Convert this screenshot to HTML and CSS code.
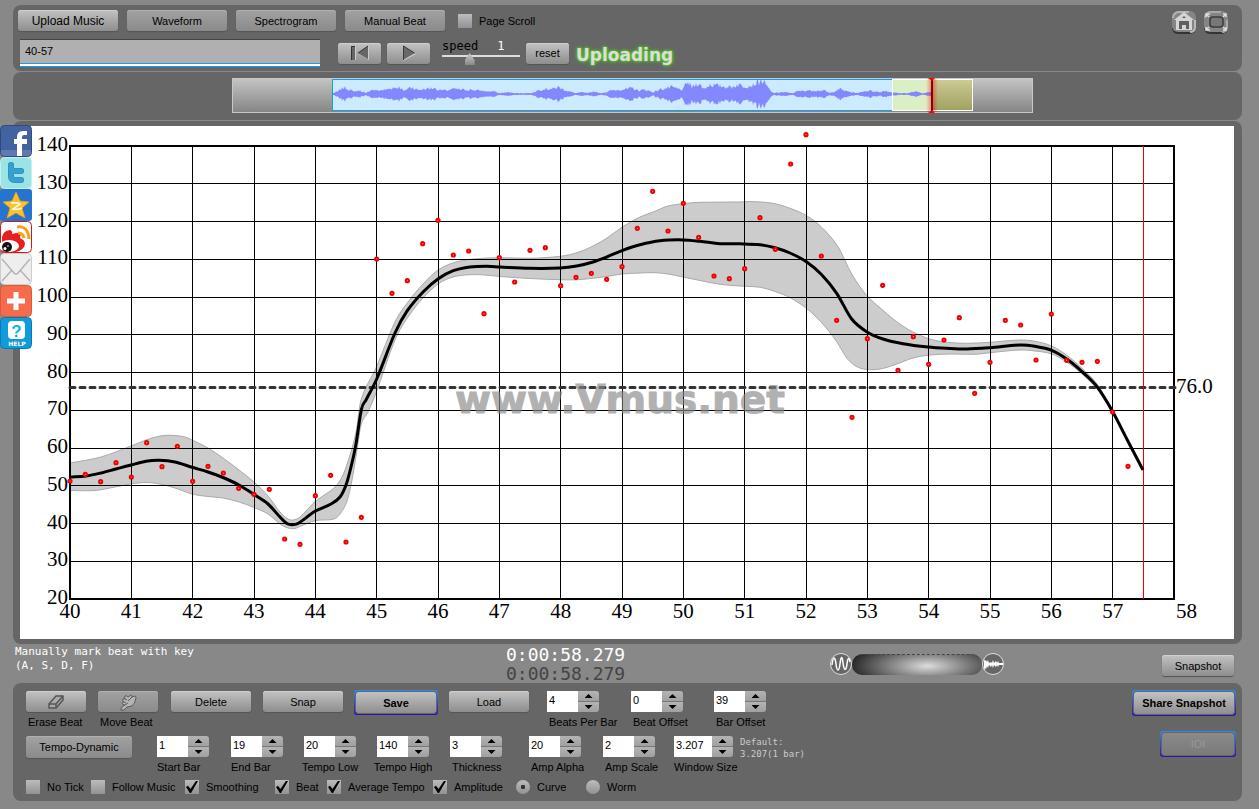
FILE: index.html
```html
<!DOCTYPE html>
<html lang="en">
<head>
<meta charset="utf-8">
<title>Vmus.net</title>
<link rel="stylesheet" href="styles.css">
</head>
<body>
<main class="app">
  <header class="panel toolbar">
    <div class="toolbar-rows">
      <div class="row tabs">
        <button class="btn wide upload" type="button">Upload Music</button>
        <button class="btn wide dim" type="button">Waveform</button>
        <button class="btn wide dim" type="button">Spectrogram</button>
        <button class="btn wide dim" type="button">Manual Beat</button>
        <label class="check page-scroll"><input type="checkbox">Page Scroll</label>
      </div>
      <div class="row player">
        <input class="title-field" type="text" value="40-57" aria-label="Title">
        <div class="transport">
          <button class="btn" type="button" aria-label="Back to start">
            <svg width="24" height="18" viewBox="0 0 24 18"><path d="M4 2h4v14H4zM21 2v14L11 9z" fill="#ccc"/><path d="M3 2h4v14H3zM20 2v13L10 9z" fill="#666"/><path d="M3.500 16V2.500H7M10 9L20 2" fill="none" stroke="#333"/></svg>
          </button>
          <button class="btn" type="button" aria-label="Play">
            <svg width="24" height="18" viewBox="0 0 24 18"><path d="M6 2v15l13-7z" fill="#ccc"/><path d="M6 2v14l12-7z" fill="#686868"/><path d="M6.500 16V2l11 7" fill="none" stroke="#3a3a3a"/></svg>
          </button>
        </div>
        <div class="speed">
          <div class="speed-text"><label for="speed">speed</label><output for="speed">1</output></div>
          <input id="speed" type="range" min="0" max="3" step="1" value="1">
        </div>
        <button class="btn reset" type="button">reset</button>
        <strong class="uploading">Uploading</strong>
      </div>
    </div>
    <nav class="window-links" aria-label="Window">
      <a href="#home" aria-label="Home">
        <svg width="26" height="24" viewBox="0 0 26 24"><rect x="1" y="2" width="24" height="22" rx="6" fill="#333"/><rect x="1" y="1" width="24" height="21" rx="6" fill="#858585"/><path d="M2 8a6 6 0 016-6h10" fill="none" stroke="#b4b4b4" stroke-width="2"/><path d="M24 10v7q0 5-5 5" fill="none" stroke="#bbb" stroke-width="2"/><path d="M13 2l10 8h-2v10H5V10H3z" fill="#d5d5d5"/><path d="M8 11h10v8h-3v-4h-4v4H8zM11 8l2-2 2 2z" fill="#606060"/></svg>
      </a>
      <a href="#fullscreen" aria-label="Full screen">
        <svg width="26" height="24" viewBox="0 0 26 24"><rect x="1" y="2" width="24" height="22" rx="6" fill="#333"/><rect x="1" y="1" width="24" height="21" rx="6" fill="#858585"/><path d="M2 8a6 6 0 016-6h10" fill="none" stroke="#a8a8a8" stroke-width="2"/><path d="M24 10v7q0 5-5 5" fill="none" stroke="#aaa" stroke-width="2"/><rect x="7" y="7" width="13" height="10" rx="3" fill="#777" stroke="#3c3c3c" stroke-width="1.500"/><path d="M3 7V4h4M20 4h3v3M3 17v3h4M23 17v3h-3M4 5l2 2M22 5l-2 2M4 19l2-2M22 19l-2-2" fill="none" stroke="#ddd" stroke-width="1.500"/></svg>
      </a>
    </nav>
  </header>

  <section class="panel overview" aria-label="Overview">
    <svg id="overview" viewBox="0 0 801 35" role="img" aria-label="Audio overview">
      <defs>
        <linearGradient id="track" x2="0" y2="1"><stop stop-color="#c4c4c4"/><stop offset="1" stop-color="#858585"/></linearGradient>
        <linearGradient id="olive" x2="0" y2="1"><stop stop-color="#cccc94"/><stop offset="1" stop-color="#a0a060"/></linearGradient>
        <linearGradient id="glow"><stop stop-color="#f00" stop-opacity="0"/><stop offset=".5" stop-color="#f00" stop-opacity=".45"/><stop offset="1" stop-color="#f00" stop-opacity="0"/></linearGradient>
      </defs>
      <rect x=".5" y=".5" width="800" height="34" fill="url(#track)" stroke="#c8c8c8"/>
      <rect x="100.500" y="1.500" width="600" height="31" fill="#cdebff" stroke="#1a9cf0"/>
      <rect x="660" y="1" width="41" height="32" fill="#daf0c4"/>
      <path id="wave" fill="#8488ff"/>
      <rect x="701" y="1" width="39" height="32" fill="url(#olive)"/>
      <rect x="660.500" y="1.500" width="80" height="31" fill="none" stroke="#fff"/>
      <rect x="694" y="1" width="12" height="33" fill="url(#glow)"/>
      <path d="M700 1v33" stroke="#c00" stroke-width="2"/><path d="M700 2v31" stroke="#400"/>
      <path d="M696 0h7l-3 3zM696 35h7l-3-3z" fill="#f00"/>
    </svg>
  </section>

  <section class="panel chart-panel" aria-label="Tempo curve">
    <svg id="chart" viewBox="20 126 1214 513" role="img" aria-label="Tempo curve, bars 40 to 57">
      <rect x="20" y="126" width="1214" height="513" fill="#fff"/>
      <path id="band" fill="#ccc" stroke="#aaa"/>
      <path id="grid" fill="none" stroke="#000" shape-rendering="crispEdges"/>
      <rect x="70" y="146" width="1104" height="453" fill="none" stroke="#000" stroke-width="2"/>
      <path d="M70 387.500H1176" stroke="#333" stroke-width="3" stroke-dasharray="5 5" stroke-linecap="round"/>
      <path d="M1143.500 146V599" stroke="#e00"/>
      <path id="curve" fill="none" stroke="#000" stroke-width="3"/>
      <g id="dots" fill="#f99" stroke="#f00000" stroke-width="2"></g>
      <g id="axis" class="axis"></g>
      <text class="axis" x="1176" y="393">76.0</text>
      <text class="watermark" x="455" y="413">www.Vmus.net</text>
    </svg>
  </section>

  <section class="status">
    <p class="hint">Manually mark beat with key<br>(A, S, D, F)</p>
    <div class="times"><time>0:00:58.279</time><time class="shadow-time">0:00:58.279</time></div>
    <div class="zoomer">
      <svg width="22" height="24" viewBox="0 0 22 24"><circle cx="11" cy="12" r="10.500" fill="#666" stroke="#ddd"/><path d="M2 13C3 4 5 4 6 12s3 8 4 0 2-9 3-1 3 9 4 1 2-6 3-2" fill="none" stroke="#fff" stroke-width="1.500"/></svg>
      <div class="wheel"></div>
      <svg width="22" height="24" viewBox="0 0 22 24"><circle cx="11" cy="12" r="10.500" fill="#666" stroke="#ddd"/><path d="M2 7l1 2 1-1 1 2 1-2 1 3 2-1 1 1 1-3 1 3 2-2 1 2 1-2 1 2h4v2h-4l-1 2-1-2-1 2-2-2-1 3-1-3-1 2-2-2-1 3-1-2-1 3-1-1-1 2z" fill="#fff"/></svg>
    </div>
    <button class="btn snapshot" type="button">Snapshot</button>
  </section>

  <section class="panel controls" aria-label="Settings">
    <div class="settings">
      <div class="grid-edit">
        <div class="field"><button class="btn icon" id="erase" type="button">
          <svg width="20" height="18" viewBox="0 0 20 18"><path d="M3 11l7-8h7v4l-7 8H3z" fill="#aaa" stroke="#555" stroke-width="1.500" stroke-linejoin="round"/><path d="M3 11h7l7-8M10 11v4" fill="none" stroke="#555" stroke-width="1.500"/></svg></button><label for="erase">Erase Beat</label></div>
        <div class="field"><button class="btn icon dim" id="move" type="button">
          <svg width="20" height="18" viewBox="0 0 20 18"><path d="M3 16q1-3 4-4-3 0-3-2 0-1 2-1-2-1-1-3 1-1 2 0-1-2 0-3 1-1 3 1l3-2q1 0 1 2l3-1q1 0 1 2-1 6-4 8l-5 1-3 3H3z" fill="#b4b4b4" stroke="#5c5c5c" stroke-linejoin="round"/><path d="M7 6l2 1M6 9l2 1M14 4l-4 4M7 12l3-2" fill="none" stroke="#5c5c5c"/></svg></button><label for="move">Move Beat</label></div>
        <button class="btn" type="button">Delete</button>
        <button class="btn" type="button">Snap</button>
        <span class="ring"><button class="btn bold" type="button">Save</button></span>
        <button class="btn" type="button">Load</button>
        <div class="field"><span class="spin"><input id="bpb" type="text" value="4"><span class="steps"><button type="button" aria-label="More beats"></button><button type="button" aria-label="Fewer beats"></button></span></span><label for="bpb">Beats Per Bar</label></div>
        <div class="field"><span class="spin"><input id="beo" type="text" value="0"><span class="steps"><button type="button" aria-label="Increase beat offset"></button><button type="button" aria-label="Decrease beat offset"></button></span></span><label for="beo">Beat Offset</label></div>
        <div class="field"><span class="spin"><input id="bao" type="text" value="39"><span class="steps"><button type="button" aria-label="Increase bar offset"></button><button type="button" aria-label="Decrease bar offset"></button></span></span><label for="bao">Bar Offset</label></div>
      </div>
      <div class="grid-values">
        <button class="btn dim" type="button">Tempo-Dynamic</button>
        <div class="field flush"><span class="spin"><input id="sb" type="text" value="1"><span class="steps"><button type="button" aria-label="Increase start bar"></button><button type="button" aria-label="Decrease start bar"></button></span></span><label for="sb">Start Bar</label></div>
        <div class="field flush"><span class="spin"><input id="eb" type="text" value="19"><span class="steps"><button type="button" aria-label="Increase end bar"></button><button type="button" aria-label="Decrease end bar"></button></span></span><label for="eb">End Bar</label></div>
        <div class="field middle"><span class="spin"><input id="tl" type="text" value="20"><span class="steps"><button type="button" aria-label="Increase tempo low"></button><button type="button" aria-label="Decrease tempo low"></button></span></span><label for="tl">Tempo Low</label></div>
        <div class="field middle"><span class="spin"><input id="th" type="text" value="140"><span class="steps"><button type="button" aria-label="Increase tempo high"></button><button type="button" aria-label="Decrease tempo high"></button></span></span><label for="th">Tempo High</label></div>
        <div class="field"><span class="spin"><input id="tk" type="text" value="3"><span class="steps"><button type="button" aria-label="Increase thickness"></button><button type="button" aria-label="Decrease thickness"></button></span></span><label for="tk">Thickness</label></div>
        <div class="field"><span class="spin"><input id="aa" type="text" value="20"><span class="steps"><button type="button" aria-label="Increase amp alpha"></button><button type="button" aria-label="Decrease amp alpha"></button></span></span><label for="aa">Amp Alpha</label></div>
        <div class="field"><span class="spin"><input id="as" type="text" value="2"><span class="steps"><button type="button" aria-label="Increase amp scale"></button><button type="button" aria-label="Decrease amp scale"></button></span></span><label for="as">Amp Scale</label></div>
        <div class="field flush"><span class="spin long"><input id="ws" type="text" value="3.207"><span class="steps"><button type="button" aria-label="Increase window size"></button><button type="button" aria-label="Decrease window size"></button></span></span><label for="ws">Window Size</label></div>
        <p class="default">Default:<br>3.207(1 bar)</p>
      </div>
      <div class="grid-options">
        <label class="check"><input type="checkbox">No Tick</label>
        <label class="check"><input type="checkbox">Follow Music</label>
        <label class="check"><input type="checkbox" checked>Smoothing</label>
        <label class="check"><input type="checkbox" checked>Beat</label>
        <label class="check"><input type="checkbox" checked>Average Tempo</label>
        <label class="check"><input type="checkbox" checked>Amplitude</label>
        <label class="check"><input type="radio" name="style" checked>Curve</label>
        <label class="check"><input type="radio" name="style">Worm</label>
      </div>
    </div>
    <div class="share">
      <span class="ring"><button class="btn bold" type="button">Share Snapshot</button></span>
      <span class="ring ioi"><button class="btn" type="button" disabled>IOI</button></span>
    </div>
  </section>
</main>

<nav class="social" aria-label="Share">
  <a href="#facebook" aria-label="Facebook"><svg viewBox="0 0 32 32"><rect width="31" height="31" x=".5" y=".5" rx="4" fill="#4362a0" stroke="#2f4a80"/><path d="M1 25h30v2q0 4-4 4H5q-4 0-4-4z" fill="#6079b0"/><path d="M17 31V19h-3v-5h3v-2q0-6 6-6h4v4h-3q-2 0-2 2v2h5v5h-5v12z" fill="#fff"/></svg></a>
  <a href="#twitter" aria-label="Twitter"><svg viewBox="0 0 32 32"><rect width="31" height="31" x=".5" y=".5" rx="4" fill="#9be4e6" stroke="#c0f0f0"/><path d="M11 8v11q0 4 4 4h6M12 14h9" fill="none" stroke="#2488b4" stroke-width="6" stroke-linecap="round" stroke-linejoin="round"/><path d="M11 8v11q0 4 4 4h6M12 14h9" fill="none" stroke="#38a0d0" stroke-width="5" stroke-linecap="round" stroke-linejoin="round"/></svg></a>
  <a href="#qzone" aria-label="Qzone"><svg viewBox="0 0 32 32"><rect width="32" height="32" rx="3" fill="#2474d0"/><path d="M16 3l4 9 9 1-7 6 3 10-9-5-9 5 3-10-7-6 9-1z" fill="#ffc42c" stroke="#f09818" stroke-width=".8"/><path d="M11 14q6-1 9 1l-7 5q5 1 9-1" fill="none" stroke="#fff" stroke-width="1.500"/></svg></a>
  <a href="#weibo" aria-label="Weibo"><svg viewBox="0 0 32 32"><rect width="31" height="31" x=".5" y=".5" rx="4" fill="#fff" stroke="#d01818"/><path d="M2 16q1-6 8-7 3 1 2 4 7-2 8 0 1 2 0 4 5 2 5 6-1 6-9 8H2z" fill="#e62020"/><ellipse cx="9" cy="25" rx="10" ry="6" fill="#fff"/><circle cx="7" cy="26" r="5" fill="#111"/><circle cx="5" cy="27.500" r="1.500" fill="#fff"/><circle cx="8" cy="25" r=".8" fill="#fff"/><path d="M17 6q11-2 12 12M18 12q5 0 6 5" fill="none" stroke="#f9a01b" stroke-width="3"/></svg></a>
  <a href="#mail" aria-label="Mail"><svg viewBox="0 0 32 32"><rect width="31" height="31" x=".5" y=".5" rx="4" fill="#eee" stroke="#ccc"/><path d="M2 28l10-11M30 28L20 17M2 6l12 14q2 2 4 0L30 6" fill="none" stroke="#b4b4b4" stroke-width="1.500"/></svg></a>
  <a href="#more" aria-label="More"><svg viewBox="0 0 32 32"><rect width="31" height="31" x=".5" y=".5" rx="4" fill="#f56c4c" stroke="#e05838"/><path d="M16 7v18M7 16h18" stroke="#fff" stroke-width="5"/></svg></a>
  <a href="#help" aria-label="Help"><svg viewBox="0 0 32 32"><rect width="31" height="31" x=".5" y=".5" rx="4" fill="#109cd8" stroke="#0878b8"/><rect x="8" y="4" width="17" height="18" rx="4" fill="#fff"/><text x="16.500" y="20" class="help-mark">?</text><text x="17" y="29" class="help-word">HELP</text></svg></a>
</nav>
<script src="app.js"></script>
</body>
</html>
```
FILE: styles.css
```css
* { box-sizing: border-box; }
body {
  margin: 0;
  background: #888;
  color: #000;
  font: 11px/14px "Liberation Sans", Arial, sans-serif;
  position: relative;
}
button, input { font: inherit; color: inherit; margin: 0; }
svg { display: block; }
p { margin: 0; }

.app { display: flex; flex-direction: column; gap: 1px; padding: 5px 17px 7px 13px; }
.panel { background: #666; border-radius: 8px; }

.btn {
  display: flex; align-items: center; justify-content: center;
  height: 21px; padding: 0; border: 0; border-radius: 3px;
  background: linear-gradient(#c2c2c2, #8e8e8e);
  box-shadow: inset 0 1px #d0d0d0, 0 1px 1px #555;
  white-space: nowrap;
}
.btn.dim { background: linear-gradient(#a2a2a2, #8a8a8a); box-shadow: inset 0 1px #b0b0b0, 0 1px 1px #555; }
.btn.bold { font-weight: bold; }
.btn:disabled { color: #999; background: linear-gradient(#8a8a8a, #7a7a7a); box-shadow: none; }

.check { display: flex; align-items: center; gap: 7px; white-space: nowrap; }
.check input {
  appearance: none; flex: none; display: grid; place-items: center;
  width: 14px; height: 14px;
  background: linear-gradient(#bcbcbc, #929292);
}
.check input[type="radio"] { border-radius: 50%; }
.check input[type="checkbox"]:checked::after {
  content: ""; width: 12px; height: 12px; background: #000;
  clip-path: polygon(0 50%, 16% 40%, 38% 66%, 82% 0, 100% 0, 42% 100%, 32% 100%);
}
.check input[type="radio"]:checked::after { content: ""; width: 4px; height: 4px; background: #333; border-radius: 1px; }

.toolbar { display: flex; justify-content: space-between; padding: 5px 13px 4px 5px; }
.toolbar-rows { display: flex; flex-direction: column; gap: 8px; }
.row { display: flex; }
.tabs { gap: 9px; }
.wide { width: 100px; }
.upload { font-size: 12px; }
.page-scroll { padding-left: 4px; }
.player { padding-left: 2px; align-items: center; height: 28px; }
.title-field {
  width: 300px; height: 28px; padding: 0 5px 5px; border: 0; outline: 0;
  border-top: 1px solid #444;
  background: linear-gradient(#1a9cf0, #1a9cf0) 0 100% / 100% 1px no-repeat,
    linear-gradient(#fff, #fff) 0 24px / 100% 2px no-repeat,
    linear-gradient(#1a9cf0, #1a9cf0) 0 23px / 100% 1px no-repeat, #b0b0b0;
}
.transport { display: flex; gap: 6px; margin-left: 18px; }
.transport .btn, .reset { width: 43px; }
.speed { width: 78px; margin: 0 6px 0 12px; }
.speed-text { display: flex; gap: 19px; font: 12px/12px "DejaVu Sans Mono", monospace; }
.speed-text output { color: #fff; }
#speed {
  display: block; width: 100%; height: 15px; appearance: none;
  background: linear-gradient(#ddd, #ddd) 0 3px / 100% 2px no-repeat;
}
#speed::-webkit-slider-thumb {
  appearance: none; width: 10px; height: 12px;
  background: linear-gradient(#ccc, #888);
  clip-path: polygon(50% 0, 100% 60%, 100% 100%, 0 100%, 0 60%);
}
.uploading {
  margin: 3px 0 0 7px; color: #ddd; font: bold 17px/20px "DejaVu Sans", sans-serif;
  text-shadow: 0 0 2px #5c2, 0 0 3px #5c2, 0 0 4px #5c2;
}
.window-links { display: flex; gap: 6px; }

.overview { display: flex; justify-content: center; padding: 6px 0 7px 10px; }
.overview svg { width: 801px; max-width: 100%; }

.chart-panel { padding: 5px 8px 5px 7px; }
.chart-panel svg { width: 100%; height: auto; }
.axis { font: 21px "Liberation Serif", serif; }
.watermark { font: bold 39px "DejaVu Sans", sans-serif; fill: #888; stroke: #888; stroke-width: 1px; opacity: .65; }

.status {
  display: grid; grid-template-columns: 49fr 12fr 20fr 18fr 23fr; align-items: center;
  height: 37px; padding: 0 8px 0 2px;
}
.hint { align-self: start; color: #fff; font: 11px/14px "DejaVu Sans Mono", monospace; }
.times { display: flex; flex-direction: column; padding-left: 2px; color: #fff; font: 18px/19px "DejaVu Sans Mono", monospace; }
.shadow-time { color: #444; }
.zoomer { grid-column: 4; display: flex; justify-self: center; align-items: center; padding-left: 4px; }
.wheel { width: 130px; height: 21px; border-radius: 10px; border-top: 1px dashed #444; background: radial-gradient(ellipse 80px 24px at 58% 55%, #ddd, #999 35%, #222); }
.snapshot { justify-self: end; width: 72px; margin-top: 3px; }

.controls { display: flex; justify-content: space-between; padding: 7px 6px 7px 13px; }
.settings { display: flex; flex-direction: column; }
.grid-edit, .grid-values, .grid-options { display: grid; align-items: start; justify-items: start; }
.grid-edit { grid-template-columns: 72px 73px 92px 91px 95px 98px 84px 83px 60px; height: 46px; padding-top: 1px; }
.grid-edit > .btn { width: 80px; }
.grid-edit .ring { width: 84px; }
.grid-values { grid-template-columns: 131px 74px 73px 73px 73px 79px 74px 71px 66px auto; height: 44px; }
.grid-values > .btn { width: 106px; height: 22px; }
.grid-options { grid-template-columns: 65px 94px 90px 52px 106px 83px 70px auto; }
.field { display: flex; flex-direction: column; gap: 3px; white-space: nowrap; }
.icon { width: 60px; }
.field label { padding-left: 2px; }
.field.flush label { padding-left: 0; }
.field.middle { width: 52px; align-items: center; }
.field.middle label { padding-left: 0; }
.spin { display: flex; width: 52px; height: 21px; }
.spin.long { width: 59px; }
.spin input { width: 0; flex: 1; border: 0; padding: 0 2px 3px; background: #fff; }
.steps { width: 21px; display: flex; flex-direction: column; border-radius: 0 3px 3px 0; overflow: hidden; background: #777; gap: 1px; }
.steps button { flex: 1; border: 0; padding: 0; display: grid; place-items: center; background: linear-gradient(#b4b4b4, #a0a0a0); }
.steps button::before { content: ""; width: 8px; height: 4px; background: #000; clip-path: polygon(50% 0, 100% 100%, 0 100%); }
.steps button + button::before { clip-path: polygon(0 0, 100% 0, 50% 100%); }
.default { color: #ccc; font: 9px/12px "DejaVu Sans Mono", monospace; }

.ring { display: flex; padding: 1px; border-radius: 3px; background: linear-gradient(#2a8cf8, #3010b0); margin-top: -1px; }
.ring .btn { border: 1px solid #666; height: 23px; box-shadow: none; flex: 1; background-clip: padding-box; background-color: #666; }
.share { display: flex; flex-direction: column; align-items: flex-end; gap: 16px; padding-top: 1px; }
.share .ring { width: 104px; }
.share .ring .btn { height: 24px; }
.share .ring.ioi { width: 76px; }

.social { position: absolute; left: 0; top: 125px; display: flex; flex-direction: column; }
.social a, .social svg { display: block; width: 32px; height: 32px; }
.help-mark { font: bold 17px "Liberation Sans", sans-serif; fill: #18b0e0; text-anchor: middle; }
.help-word { font: bold 6px "DejaVu Sans", sans-serif; fill: #fff; text-anchor: middle; }
```
FILE: app.js
```js
const barX = bar => 70 + (bar - 40) * 1104 / 18;
const tempoY = tempo => 599 - (tempo - 20) * 453 / 120;
const pairs = s => s.split(" ").map(p => p.split(",").map(Number));
const byId = id => document.getElementById(id);

// Cubic segments whose tangents follow the slope between neighbouring points.
function smooth(pts) {
  const slope = i => {
    const a = pts[Math.max(i - 1, 0)], b = pts[Math.min(i + 1, pts.length - 1)];
    return (b[1] - a[1]) / (b[0] - a[0]);
  };
  let d = "";
  for (let i = 0; i < pts.length - 1; i++) {
    const b = pts[i], c = pts[i + 1], t = (c[0] - b[0]) / 3;
    d += `C${b[0] + t} ${b[1] + t * slope(i)} ${c[0] - t} ${c[1] - t * slope(i + 1)} ${c[0]} ${c[1]}`;
  }
  return d;
}

const mean = pairs("70,477 86,476 101,473 116,469 131,465 146,461.3 159,460.3 175,462 192,467.3 208,472 223,477.5 239,485 254,494.5 268,504 280,517 287,523.5 292,524.7 298,523.5 315,511.3 331,504 340,497 346,485 351,467 356,444 361.5,409 366,400 376.7,379 395,333 407.3,310.7 423.3,291.7 438.3,278.7 453.3,270.7 470,267 487,266.3 500,267 530,268.3 560,268 576.7,266 593,262 606.7,257 622.7,250.3 640,244.7 660,240.7 683,239.9 700,241.3 720,243.7 740,243.8 760,244.7 775,247.7 790,253 806.7,262 821.7,274.7 836.7,293.3 851.7,319 866.7,331.7 883,339 903,343.7 928,347 946.7,348.3 966.7,349 990,347.7 1020,345 1035,346.3 1051.7,350.3 1066.7,359 1081.7,371.3 1097,386.7 1112.7,411.7 1127.7,440.7 1143,470");
const upper = pairs("70,463 101,457 131,446 146,440 160,436 172,435.3 185,437 192,440 208,448 223,458 239,470 254,482 268,496 280,512 288,519 293,520 300,517 315,501.7 335,487 343,475 350,455 356,432 361,400 376,368 395,322 408,302 423,284 438,270 453,263 470,259.3 500,257.7 530,258.3 560,256.3 577,252.7 593,246 607,238 622.7,226.7 640,217 653,212 668,206 683,203.7 700,202.3 740,202 750,201.5 773,203.3 790,208.3 806.7,215.7 821.7,227.3 838,246.7 851.7,274 866.7,295.3 883,310.3 898,322.7 913,332 930,339 946.7,342.3 966.7,343.3 990,342.3 1020,340 1035,341.3 1051.7,346 1066.7,355.3 1081.7,368 1097,384 1112.7,410");
const lower = pairs("70,490.5 95,490.5 115,487 131,484 146,482.5 160,484 175,488 192,494 208,496.5 223,498 239,502 254,507.5 268,514 280,524 288,528 295,528.5 301,526 315,520.7 334,519 340,514 347,501 352,480 357,450 361,425 368,412 376,393 395,340 408,317 423,298 438,284 453,277 470,274.7 485,275 500,276.5 530,278.5 560,279.7 577,279.7 593,278.3 607,276.5 622,274 640,273 655,272.7 668,274 683,277 700,280.5 720,284.3 740,286 760,287.3 775,291.5 790,297.7 806,308 821.7,322.7 836.7,341.7 847,358.3 856,366.3 866,369.3 880,369 895,364.7 913,358 930,355 950,354 975,354.3 990,352.7 1020,350 1035,351 1051.7,354 1066.7,362 1082,374 1097,389 1112.7,413").reverse();

byId("curve").setAttribute("d", "M" + mean[0] + smooth(mean));
byId("band").setAttribute("d", "M" + upper[0] + smooth(upper) + "L" + lower[0] + smooth(lower) + "Z");

// One beat marker per quarter bar, starting at bar 40.
const beats = [481, 474.3, 481.7, 462.7, 477, 442.7, 466.7, 446.3, 481.3, 466.3, 473, 488.3, 494.3, 489.3, 539, 544.3, 495.7, 475.3, 542, 517.3,
  259, 293.3, 280.7, 243.7, 220.3, 255, 251, 313.7, 257.7, 282, 250.3, 247.7, 285.7, 277.3, 273.3, 279.3, 266.7, 228.3, 191.3, 231, 203.3, 237.3, 276, 278.7,
  268.7, 217.7, 249.3, 164, 134.7, 256, 320.3, 417.3, 338.7, 285.3, 370.3, 336.7, 364.3, 340, 317.7, 393.3, 362.3, 320.3, 325, 360, 314, 360.3, 362.3, 361.3, 412, 466.3];
byId("dots").innerHTML = beats.map((y, i) => `<circle cx="${barX(40 + i / 4)}" cy="${y}" r="1.6"/>`).join("");

let grid = "", labels = "";
for (let bar = 40; bar <= 58; bar++) {
  const x = barX(bar);
  if (bar > 40 && bar < 58) grid += `M${x} 146V599`;
  labels += bar < 58
    ? `<text x="${x}" y="618" text-anchor="middle">${bar}</text>`
    : `<text x="${x + 2}" y="618">${bar}</text>`;
}
for (let tempo = 20; tempo <= 140; tempo += 10) {
  const y = tempoY(tempo);
  if (tempo > 20 && tempo < 140) grid += `M70 ${y}H1174`;
  labels += `<text x="68" y="${y + 5}" text-anchor="end">${tempo}</text>`;
}
byId("grid").setAttribute("d", grid);
byId("axis").innerHTML = labels;

// Waveform envelope: position and half height, with a repeatable jitter.
const env = pairs("101,1 106,3 112,8 117,5 122,3 128,4 134,1 139,5 146,4 154,5 160,7 168,8 172,3 176,7 180,8 185,5 188,5 194,6 202,7 206,5 214,4 222,6 230,5 238,5 248,4 256,3 262,3 267,1 276,2 285,1 300,1 305,4 313,6 321,6 326,8 332,5 337,3 344,1 350,2 356,1 362,3 368,1 374,2 379,4 387,5 396,6 401,7 406,4 414,5 421,2 427,5 431,6 440,8 446,6 451,5 455,14 460,8 466,13 472,6 478,11 490,9 500,8 506,11 512,9 520,10 526,14 530,16 535,9 539,3 542,1 547,2 554,2 560,1 565,3 574,4 582,4 592,4 598,1 602,3 608,6 615,3 626,1 631,3 637,4 643,3 648,2 652,4 660,2 668,1 676,1 683,3 690,1 696,2 700,2");
const halves = [];
for (let x = 101, k = 0, seed = 7; x <= 700; x++) {
  while (env[k + 1] && env[k + 1][0] < x) k++;
  const a = env[k], b = env[k + 1] || a;
  const h = a[1] + (b[1] - a[1]) * (x - a[0]) / (b[0] - a[0]);
  seed = (seed * 1103515245 + 12345) % 2147483648;
  halves.push([x, Math.min(15, Math.max(0.7, h * (0.6 + 0.5 * seed / 2147483648)))]);
}
byId("wave").setAttribute("d", "M" + halves.map(([x, h]) => `${x} ${16 - h}`).join("L") + "L" + halves.reverse().map(([x, h]) => `${x} ${16 + h}`).join("L") + "Z");
```
